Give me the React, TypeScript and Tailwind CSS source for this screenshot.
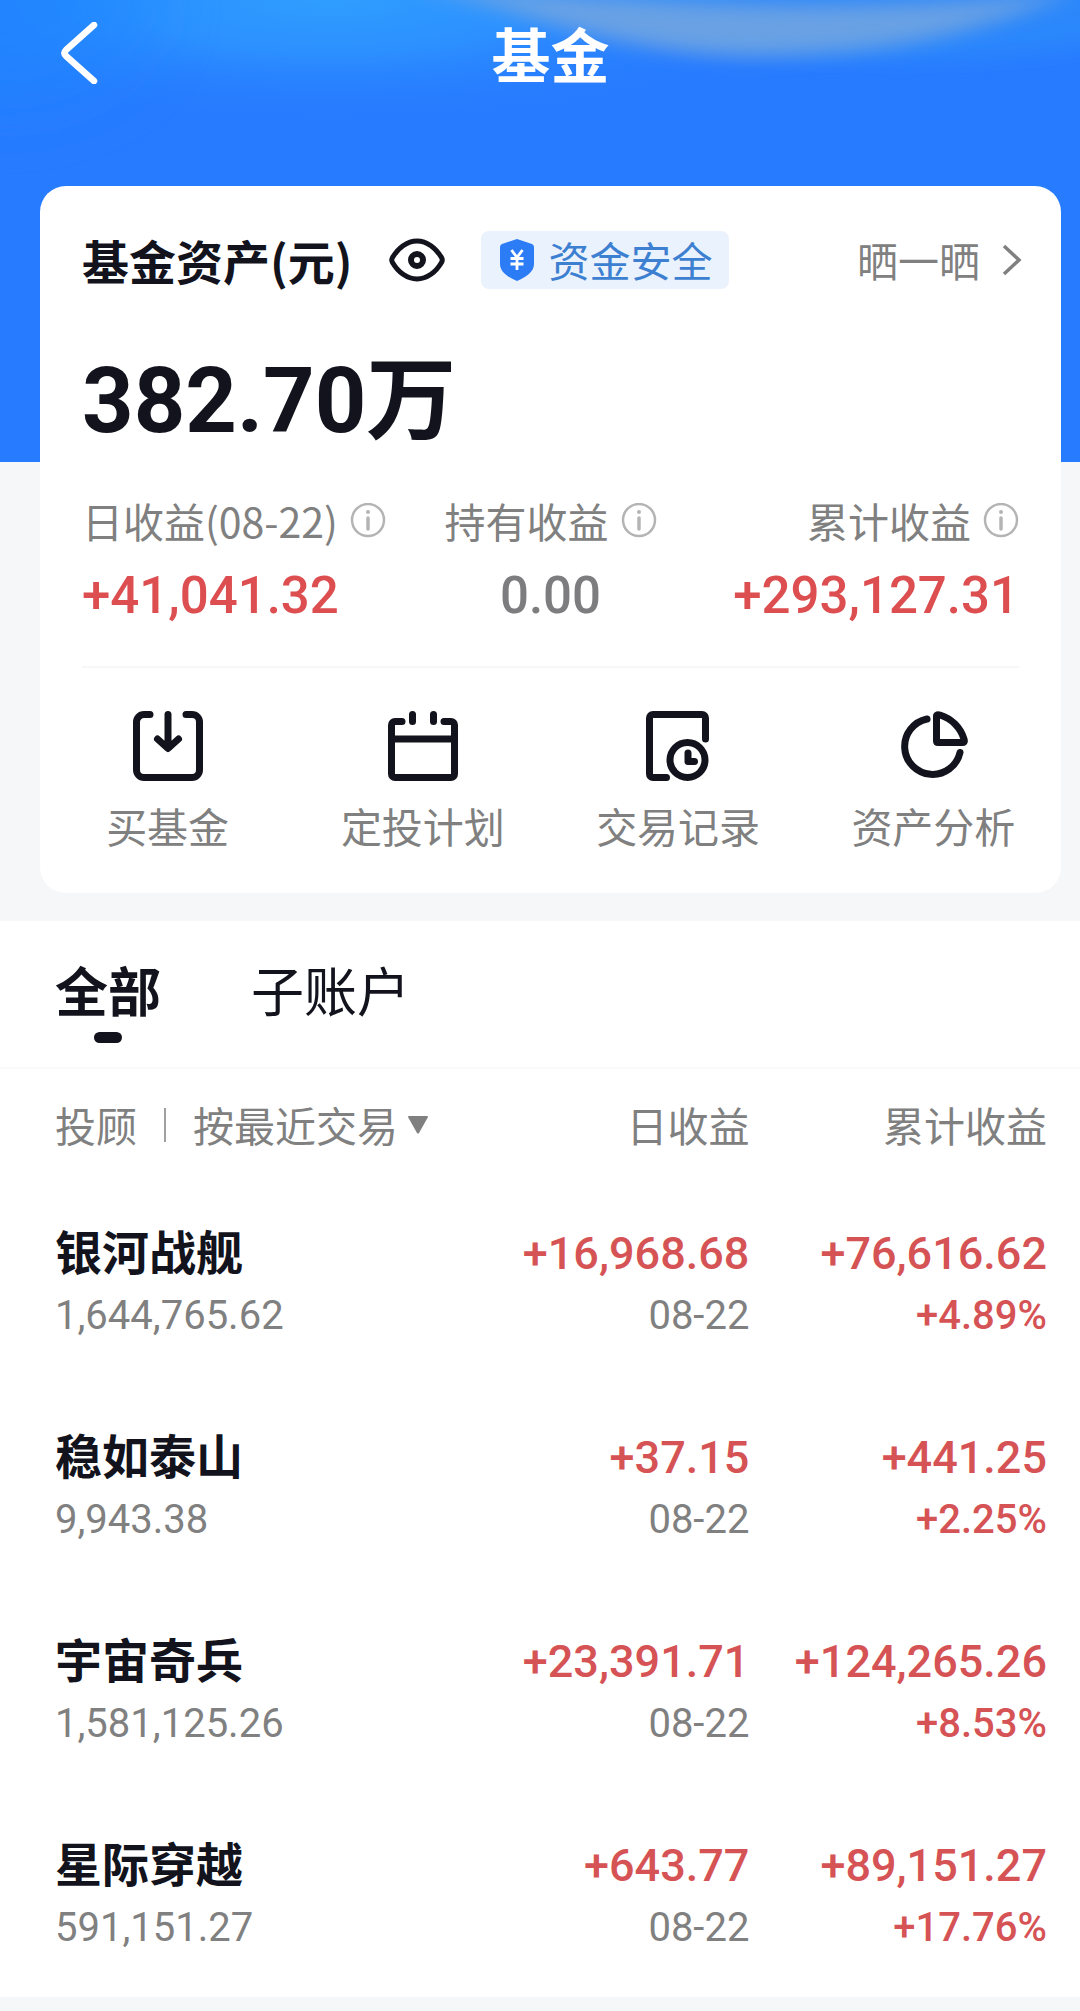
const actions = [
  { label: "买基金", icon: <BuyIcon /> },
  { label: "定投计划", icon: <PlanIcon /> },
  { label: "交易记录", icon: <RecordIcon /> },
  { label: "资产分析", icon: <AnalysisIcon /> },
];

const accounts = [
  { name: "银河战舰", amount: "1,644,765.62", daily: "+16,968.68", date: "08-22", total: "+76,616.62", rate: "+4.89%" },
  { name: "稳如泰山", amount: "9,943.38", daily: "+37.15", date: "08-22", total: "+441.25", rate: "+2.25%" },
  { name: "宇宙奇兵", amount: "1,581,125.26", daily: "+23,391.71", date: "08-22", total: "+124,265.26", rate: "+8.53%" },
  { name: "星际穿越", amount: "591,151.27", daily: "+643.77", date: "08-22", total: "+89,151.27", rate: "+17.76%" },
];

function BuyIcon() {
  return (
    <svg className="size-[70px]" viewBox="0 0 70 70" fill="none" stroke="currentColor" strokeWidth="7" strokeLinecap="round" strokeLinejoin="round" aria-hidden="true">
      <path d="M17 3.5H11a7.5 7.5 0 0 0-7.5 7.5v48a7.5 7.5 0 0 0 7.5 7.5h48a7.5 7.5 0 0 0 7.5-7.5V11A7.5 7.5 0 0 0 59 3.5H53" />
      <path d="M35 3.5V37M24.5 28 35 37.5 45.5 28" />
    </svg>
  );
}

function PlanIcon() {
  return (
    <svg className="size-[70px]" viewBox="0 0 70 70" fill="none" stroke="currentColor" strokeWidth="7" strokeLinecap="round" strokeLinejoin="round" aria-hidden="true">
      <path d="M14 10.5H7a3.5 3.5 0 0 0-3.5 3.5v49a3.5 3.5 0 0 0 3.5 3.5h56a3.5 3.5 0 0 0 3.5-3.5V14a3.5 3.5 0 0 0-3.5-3.5H56" />
      <path d="M3.5 28H66.5M24.5 3.5V10.5M45.5 3.5V10.5" />
    </svg>
  );
}

function RecordIcon() {
  return (
    <svg className="size-[70px]" viewBox="0 0 70 70" fill="none" stroke="currentColor" strokeWidth="7" strokeLinecap="round" strokeLinejoin="round" aria-hidden="true">
      <path d="M23.5 66.5H10a3.5 3.5 0 0 1-3.5-3.5V7A3.5 3.5 0 0 1 10 3.5H59a3.5 3.5 0 0 1 3.5 3.5V28" />
      <circle cx="44.5" cy="49" r="17.5" />
      <path d="M45 42V50.5H51.5" />
    </svg>
  );
}

function AnalysisIcon() {
  return (
    <svg className="size-[70px]" viewBox="0 0 70 70" fill="none" stroke="currentColor" strokeWidth="7" strokeLinecap="round" strokeLinejoin="round" aria-hidden="true">
      <path d="M29 8A28 28 0 1 0 62 41.5" />
      <path d="M38.5 5Q38.5 3 42 4A36 36 0 0 1 66 28Q67 31.5 65 31.5H40Q38.5 31.5 38.5 30Z" />
    </svg>
  );
}

function InfoIcon() {
  return (
    <svg className="size-9 shrink-0 text-[#b4b4b4]" viewBox="0 0 36 36" fill="none" stroke="currentColor" strokeWidth="2.5" aria-hidden="true">
      <circle cx="18" cy="17" r="16" />
      <circle cx="18" cy="9" r="2" fill="currentColor" stroke="none" />
      <path d="M18 15V26" strokeWidth="3.5" strokeLinecap="round" />
    </svg>
  );
}

function Stat({ label, value, className, color }: { label: string; value: string; className: string; color: string }) {
  return (
    <div className={`flex flex-col gap-[7px] ${className}`}>
      <div className="flex h-16 items-center gap-3 text-[41px] text-[#808080]">
        <span>{label}</span>
        <button type="button" aria-label={`${label}说明`}>
          <InfoIcon />
        </button>
      </div>
      <div className={`font-[Roboto,'Noto_Sans_CJK_SC',sans-serif] text-[51px] leading-[72px] font-medium ${color}`}>{value}</div>
    </div>
  );
}

export default function App() {
  return (
    <main className="bg-[#f6f7f9] pb-[14px] font-['Noto_Sans_CJK_SC',sans-serif] text-[#12131c]">
      <div className="relative bg-linear-to-b from-[#277bff] from-[462px] to-[#f6f7f9] to-[462px] pb-7">
        <svg className="absolute inset-x-0 top-0 h-[186px] w-full" viewBox="0 0 1080 186" preserveAspectRatio="none" aria-hidden="true">
          <defs>
            <radialGradient id="glow">
              <stop offset="0" stopColor="#2f9dff" />
              <stop offset="0.4" stopColor="#2e97ff" stopOpacity="0.8" />
              <stop offset="1" stopColor="#277bff" stopOpacity="0" />
            </radialGradient>
            <filter id="soft" x="-20%" y="-80%" width="140%" height="260%">
              <feGaussianBlur stdDeviation="10" />
            </filter>
            <filter id="softer" x="-50%" y="-80%" width="200%" height="260%">
              <feGaussianBlur stdDeviation="30" />
            </filter>
          </defs>
          <ellipse cx="330" cy="0" rx="500" ry="125" fill="url(#glow)" />
          <ellipse cx="0" cy="0" rx="160" ry="110" fill="#1c88ff" opacity="0.5" filter="url(#softer)" />
          <ellipse cx="900" cy="0" rx="300" ry="60" fill="#2f8ffa" opacity="0.6" filter="url(#soft)" />
          <path d="M400 -16C520 6 600 52 740 56C880 56 970 36 1080 -10C970 4 860 6 760 4C640 2 540 -10 400 -16Z" fill="#74a6e0" opacity="0.85" filter="url(#soft)" />
        </svg>

        <header className="relative grid h-[186px] grid-cols-[1fr_auto_1fr] items-start pt-[13px] pr-9 pl-[57px]">
          <button type="button" aria-label="返回" className="flex h-20 items-center text-white">
            <svg className="h-[62px] w-11" viewBox="0 0 44 62" fill="none" stroke="currentColor" strokeWidth="6.5" strokeLinecap="round" strokeLinejoin="round" aria-hidden="true">
              <path d="M37 3 9 28Q6 31 9 34L37 59" />
            </svg>
          </button>
          <h1 className="text-[59px] leading-[80px] font-bold text-white">基金</h1>
        </header>

        <section className="relative mr-[19px] ml-10 rounded-[26px] bg-white pt-[42px]">
          <div className="flex h-16 items-center pr-[37px] pl-[42px]">
            <h2 className="text-[47px] font-bold">基金资产(元)</h2>
            <button type="button" aria-label="隐藏金额" className="ml-9">
              <svg className="h-11 w-14" viewBox="0 0 56 44" fill="none" stroke="currentColor" aria-hidden="true">
                <path d="M3.5 19.5C9 10 18 3 28 3S47 10 52.5 19.5Q54 22 52.5 24.5C47 34 38 41 28 41S9 34 3.5 24.5Q2 22 3.5 19.5Z" strokeWidth="5" strokeLinejoin="round" />
                <circle cx="28" cy="22" r="6" strokeWidth="6" />
              </svg>
            </button>
            <a href="#safety" className="ml-9 flex h-[58px] items-center gap-[15px] rounded-lg bg-[#eaf2fd] pr-4 pl-[19px] text-[41px] text-[#3d7fd0]">
              <svg className="h-[42px] w-[34px]" viewBox="0 0 34 42" aria-hidden="true">
                <path d="M17 0 32 5Q34 6 34 8V25C34 33 26 38 17 42C8 38 0 33 0 25V8Q0 6 2 5Z" fill="#2c7cf6" />
                <path d="M11.5 11 17 18.5 22.5 11M10.5 19.5H23.5M10.5 25H23.5M17 18.5V31" fill="none" stroke="#fff" strokeWidth="2.8" />
              </svg>
              资金安全
            </a>
            <a href="#share" className="ml-auto flex items-center gap-5 text-[41px] text-[#808080]">
              晒一晒
              <svg className="h-8 w-6" viewBox="0 0 24 32" fill="none" stroke="currentColor" strokeWidth="3.5" aria-hidden="true">
                <path d="M4 2 19 16 4 30" />
              </svg>
            </a>
          </div>

          <p className="mt-[50px] pl-[42px] font-[Roboto,'Noto_Sans_CJK_SC',sans-serif] text-[90px] leading-[120px] font-bold">382.70万</p>

          <div className="mx-[42px] mt-[27px] grid grid-cols-[1fr_auto_1fr] border-b-2 border-[#f7f7f8] pb-[34px]">
            <Stat label="日收益(08-22)" value="+41,041.32" className="items-start" color="text-[#dc4e50]" />
            <Stat label="持有收益" value="0.00" className="items-center" color="text-[#7d7d80]" />
            <Stat label="累计收益" value="+293,127.31" className="items-end" color="text-[#dc4e50]" />
          </div>

          <nav className="grid grid-cols-4 pt-[43px] pb-9">
            {actions.map((action) => (
              <a key={action.label} href="#" className="flex flex-col items-center gap-3">
                {action.icon}
                <span className="text-[41px] leading-[64px] text-[#808080]">{action.label}</span>
              </a>
            ))}
          </nav>
        </section>
      </div>

      <section className="bg-white">
        <div role="tablist" className="flex h-[148px] items-start gap-[90px] border-b-2 border-[#fafafa] px-[55px] pt-7 text-[53px] leading-[80px]">
          <button type="button" role="tab" aria-selected="true" className="flex flex-col items-center gap-[3px] font-bold">
            全部
            <span className="h-[11px] w-7 rounded-full bg-[#12131c]" />
          </button>
          <button type="button" role="tab" aria-selected="false">
            子账户
          </button>
        </div>

        <div className="pr-[33px] pl-[55px]">
          <table className="w-full table-fixed text-right">
            <thead className="text-[41px] text-[#808080]">
              <tr className="h-28">
                <th className="w-[40%] text-left font-normal">
                  <div className="flex items-center">
                    投顾
                    <span className="mx-[27px] h-[34px] w-0.5 bg-[#a0a0a0]" />
                    <button type="button" className="flex items-center gap-[10px] whitespace-nowrap">
                      按最近交易
                      <svg className="h-[18px] w-5" viewBox="0 0 20 18" fill="currentColor" aria-hidden="true">
                        <path d="M1 0H19Q20 0 20 1L11 17Q10 18 9 17L0 1Q0 0 1 0Z" />
                      </svg>
                    </button>
                  </div>
                </th>
                <th className="w-[30%] font-normal">日收益</th>
                <th className="w-[30%] font-normal">累计收益</th>
              </tr>
            </thead>
            <tbody className="font-[Roboto,'Noto_Sans_CJK_SC',sans-serif] text-[40px] leading-[62px]">
              {accounts.map((account) => (
                <tr key={account.name}>
                  <td className="pt-[42px] pb-[38px] text-left text-[#808080]">
                    <div className="text-[47px] font-bold text-[#12131c]">{account.name}</div>
                    {account.amount}
                  </td>
                  <td className="pt-[42px] pb-[38px] text-[#808080]">
                    <div className="text-[45px] font-medium text-[#d65355]">{account.daily}</div>
                    {account.date}
                  </td>
                  <td className="pt-[42px] pb-[38px] text-[#d65355]">
                    <div className="text-[45px] font-medium">{account.total}</div>
                    <div className="font-medium">{account.rate}</div>
                  </td>
                </tr>
              ))}
            </tbody>
          </table>
        </div>
      </section>
    </main>
  );
}
